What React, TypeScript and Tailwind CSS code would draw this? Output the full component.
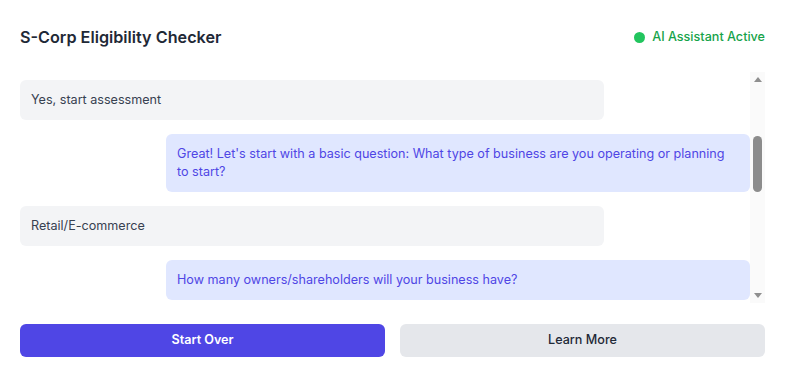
import { useLayoutEffect, useRef } from "react";

type Msg = { from: "ai" | "user"; text: string; anchor?: boolean };

const messages: Msg[] = [
  {
    from: "ai",
    text: "Hello! I'm your S-Corp eligibility assistant. I'll ask you a few questions to help determine whether an S-Corp election could make sense for your business.",
  },
  { from: "user", text: "What is an S-Corp?" },
  {
    from: "ai",
    text: "An S-Corp is a tax status that lets profits pass through to owners while potentially reducing self-employment taxes. Ready to begin the assessment?",
  },
  { from: "user", text: "Yes, start assessment", anchor: true },
  {
    from: "ai",
    text: "Great! Let's start with a basic question: What type of business are you operating or planning to start?",
  },
  { from: "user", text: "Retail/E-commerce" },
  { from: "ai", text: "How many owners/shareholders will your business have?" },
];

const options = ["Just me", "2-10 owners", "11-100 owners", "More than 100 owners", "Not sure yet"];

function Bubble({ msg }: { msg: Msg }) {
  const isAi = msg.from === "ai";
  return (
    <div
      data-anchor={msg.anchor ? "1" : undefined}
      className={
        isAi
          ? "ml-auto w-[80%] rounded-md bg-[#e0e7ff] px-[11px] py-[11px] text-[12.6px] leading-[18px] text-[#4f46e5]"
          : "w-[80%] rounded-md bg-[#f3f4f6] px-[11px] py-[11px] text-[12.6px] leading-[18px] text-[#374151]"
      }
    >
      {msg.text}
    </div>
  );
}

function ScrollTrack() {
  return (
    <div className="flex w-[15px] shrink-0 flex-col bg-[#fafafa]">
      <div className="flex h-[15px] items-center justify-center">
        <span className="h-0 w-0 border-x-[4.5px] border-b-[5px] border-x-transparent border-b-[#8f8f8f]" />
      </div>
      <div className="flex flex-1 justify-center">
        <span className="mt-[49px] h-[56px] w-[9px] rounded-full bg-[#8c8c8c]" />
      </div>
      <div className="flex h-[15px] items-center justify-center">
        <span className="h-0 w-0 border-x-[4.5px] border-t-[5px] border-x-transparent border-t-[#8f8f8f]" />
      </div>
    </div>
  );
}

export default function App() {
  const scrollRef = useRef<HTMLDivElement>(null);

  useLayoutEffect(() => {
    const box = scrollRef.current;
    if (!box) return;
    const anchor = box.querySelector<HTMLElement>("[data-anchor]");
    if (anchor) box.scrollTop = anchor.offsetTop - 8;
  }, []);

  return (
    <div className="min-h-screen bg-white pl-5 pt-5 font-['Inter','Liberation_Sans',sans-serif]">
      <div className="w-[745px]">
        <header className="mb-[17px] flex h-[35px] items-center justify-between">
          <h1 className="text-[16.2px] font-semibold text-[#1f2937]">S-Corp Eligibility Checker</h1>
          <div className="flex items-center gap-[7px] text-[12.6px] font-medium text-[#16a34a]">
            <span className="h-[10.8px] w-[10.8px] rounded-full bg-[#22c55e]" />
            AI Assistant Active
          </div>
        </header>

        <div className="flex h-[231px]">
          <div
            ref={scrollRef}
            className="relative min-w-0 flex-1 overflow-y-scroll [scrollbar-width:none] [&::-webkit-scrollbar]:hidden"
          >
            <div className="flex flex-col gap-[14px] py-3">
              {messages.map((m, i) => (
                <Bubble key={i} msg={m} />
              ))}
              <div className="ml-auto flex w-[80%] flex-col gap-2">
                {options.map((o) => (
                  <button
                    key={o}
                    className="rounded-md border border-[#c7d2fe] bg-white px-3 py-[10px] text-left text-[12.6px] text-[#4f46e5]"
                  >
                    {o}
                  </button>
                ))}
              </div>
            </div>
          </div>
          <ScrollTrack />
        </div>

        <div className="mt-[21px] grid grid-cols-2 gap-[15px]">
          <button className="h-[33px] rounded-md bg-[#4f46e5] text-[12.6px] font-semibold text-white">Start Over</button>
          <button className="h-[33px] rounded-md bg-[#e5e7eb] text-[12.6px] font-medium text-[#1f2937]">Learn More</button>
        </div>
      </div>
    </div>
  );
}
